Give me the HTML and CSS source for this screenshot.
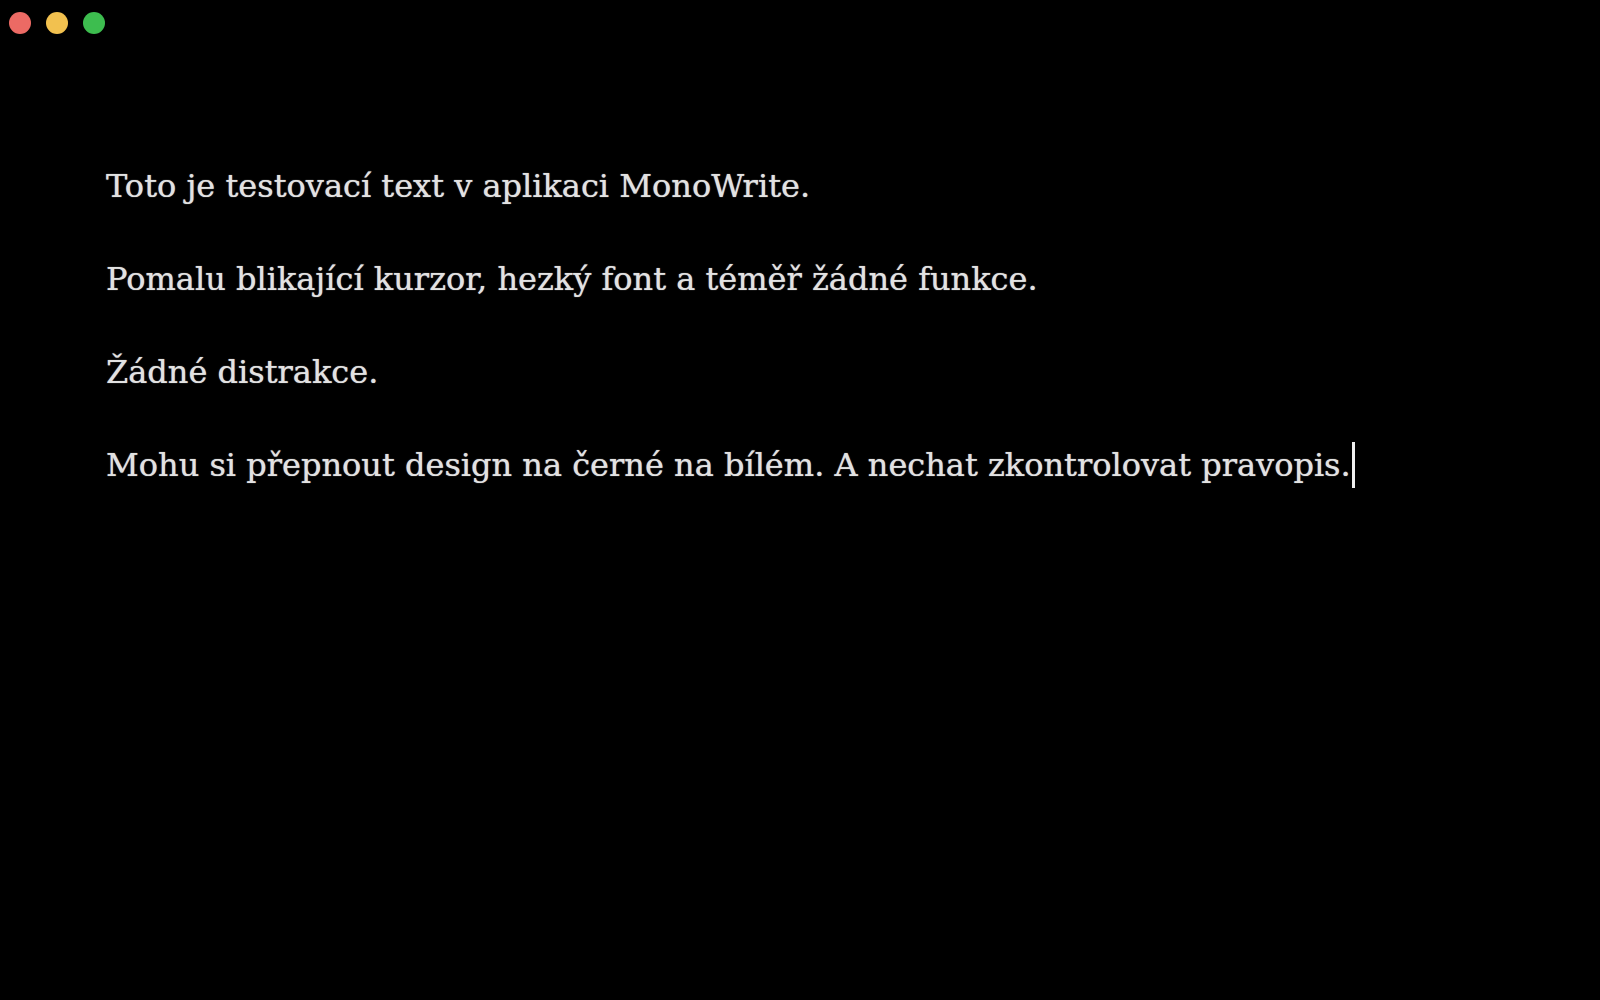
FILE: index.html
```html
<!DOCTYPE html>
<html lang="cs">
<head>
<meta charset="utf-8">
<title>MonoWrite</title>
<link rel="stylesheet" href="styles.css">
</head>
<body>
<div class="window">
  <header class="titlebar">
    <span class="light red"></span>
    <span class="light yellow"></span>
    <span class="light green"></span>
  </header>
  <main class="editor">
    <p>Toto je testovací text v aplikaci MonoWrite.</p>
    <p>Pomalu blikající kurzor, hezký font a téměř žádné funkce.</p>
    <p>Žádné distrakce.</p>
    <p>Mohu si přepnout design na černé na bílém. A nechat zkontrolovat pravopis.<span class="caret"></span></p>
  </main>
</div>
</body>
</html>
```
FILE: styles.css
```css
html, body {
  margin: 0;
  padding: 0;
  background: #000;
}
.window {
  width: 1600px;
  height: 1000px;
  background: #000;
  overflow: hidden;
}
.titlebar {
  display: flex;
  gap: 15px;
  padding: 12px 0 0 9px;
}
.light {
  width: 22px;
  height: 22px;
  border-radius: 50%;
  display: block;
}
.red { background: #ec6a64; }
.yellow { background: #f2c14f; }
.green { background: #3dbd4f; }
.editor {
  padding: 129px 0 0 106px;
  font-family: "DejaVu Serif", serif;
  font-size: 32px;
  line-height: 46px;
  color: #e2e2e2;
  text-shadow: 0 0 1px rgba(230, 230, 230, 0.8);
  display: flex;
  flex-direction: column;
  gap: 47px;
}
.editor p {
  margin: 0;
}
.caret {
  display: inline-block;
  width: 3px;
  height: 46px;
  background: #f0f0f0;
  vertical-align: -12px;
  margin-left: 1px;
}
```
